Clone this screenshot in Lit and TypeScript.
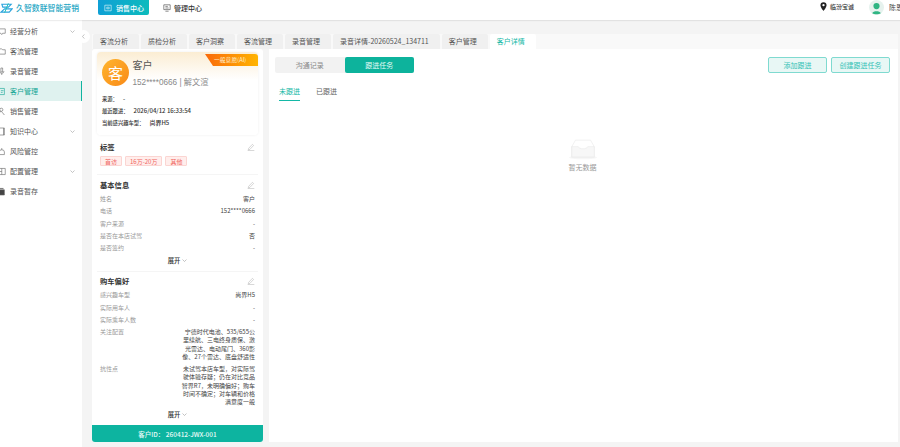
import {LitElement, html, css, svg} from 'lit';
import {customElement} from 'lit/decorators.js';

const chevron = html`<svg class="chev" viewBox="0 0 10 6"><path d="M1 1l4 4 4-4" fill="none" stroke="currentColor" stroke-width="1"/></svg>`;
const pencil = html`<svg class="pen" viewBox="0 0 12 12"><path d="M2.5 8l5.6-6 1.8 1.7-5.7 6-2.3.5zM1 11.3h10" fill="none" stroke="#a8a8a8" stroke-width=".7"/></svg>`;

const navIcons: Record<string, unknown> = {
  chat: svg`<path d="M-1 2h7v5h-3l-1 1.5-1-1.5h-2z"/>`,
  folder: svg`<path d="M-1 2h3l1 1h3v5h-7z"/>`,
  mic: svg`<path d="M1 1h2v4.500h-2zM-.5 4.500a2.500 2.500 0 0 0 5 0M2 7v2"/>`,
  cust: svg`<path d="M-1 1.500h6v7h-6zM1 4h3M1 6h2"/>`,
  sale: svg`<circle cx="1.500" cy="3" r="1.800"/><path d="M-1 9c0-3 1-4 2.500-4l1.500 1.500 2 2.500"/>`,
  book: svg`<path d="M-1 1h6v8h-6zM4 1v8"/>`,
  risk: svg`<path d="M2 1v2M-1 8.500h6v-3a3 2.500 0 0 0-6 0z"/>`,
  conf: svg`<path d="M-1 1.500h7v7h-7zM2 1.500v7M-1 5h3"/>`,
  draft: svg`<path d="M-1 3h6v6h-6z" fill="#444"/><path d="M0 1.500h4" stroke-width="1"/>`,
};

const nav = [
  {label: '经营分析', icon: 'chat', more: true},
  {label: '客流管理', icon: 'folder'},
  {label: '录音管理', icon: 'mic'},
  {label: '客户管理', icon: 'cust', active: true},
  {label: '销售管理', icon: 'sale'},
  {label: '知识中心', icon: 'book', more: true},
  {label: '风险管控', icon: 'risk'},
  {label: '配置管理', icon: 'conf', more: true},
  {label: '录音暂存', icon: 'draft'},
];

const tabs = ['客流分析', '质检分析', '客户洞察', '客流管理', '录音管理', '录音详情-20260524_134711', '客户管理', '客户详情'];

@customElement('app-root')
export class AppRoot extends LitElement {
  private row(k: string, v: unknown) {
    return html`<div class="row"><span class="k">${k}</span><span class="v">${v}</span></div>`;
  }

  override render() {
    return html`
      <header>
        <div class="brand">
          <svg viewBox="0 0 14 12" class="logo"><path d="M2 2h10L9 5H3zM5 7h8l-3 3.500H1z" fill="none" stroke="#2aa3dd" stroke-width="1.200"/><path d="M9 1L5 11" stroke="#18c0b4" stroke-width="1"/></svg>
          <span>久智数联智能营销</span>
        </div>
        <div class="topnav on">
          <svg viewBox="0 0 10 10"><path d="M1 1.500h8v7h-8zM3.500 4h3v2h-3z" fill="none" stroke="#fff" stroke-width=".7"/></svg>
          销售中心
        </div>
        <div class="topnav">
          <svg viewBox="0 0 10 10"><path d="M1 1h8v6h-8zM3 9h4M3 3h3M3 5h4" fill="none" stroke="#333" stroke-width=".7"/></svg>
          管理中心
        </div>
        <div class="spacer"></div>
        <svg class="pin" viewBox="0 0 8 10"><path fill-rule="evenodd" d="M4 0a3.500 3.500 0 0 1 3.500 3.500C7.500 6 4 10 4 10S.5 6 .5 3.500A3.500 3.500 0 0 1 4 0zm0 2.200a1.300 1.300 0 1 0 0 2.600 1.300 1.300 0 0 0 0-2.600z" fill="#222"/></svg>
        <span class="store">临汾宝诚</span>
        <svg class="avatar" viewBox="0 0 16 16"><circle cx="8" cy="8" r="8" fill="#e6f2ee"/><circle cx="8" cy="6.500" r="3.300" fill="#2fb583"/><path d="M3.500 14c1-2.500 8-2.500 9 0-2 1.500-7 1.500-9 0z" fill="#2fb583"/></svg>
        <span class="user">陈恩</span>
      </header>
      <div class="body">
        <nav>
          ${nav.map(
            (n) => html`<div class="item ${n.active ? 'active' : ''}">
              <svg class="nicon" viewBox="0 0 8 10">${navIcons[n.icon]}</svg>
              <span>${n.label}</span>
              ${n.more ? chevron : ''}
            </div>`
          )}
        </nav>
        <div class="collapse"><svg viewBox="0 0 6 8"><path d="M4 1.500L1.800 4 4 6.500" fill="none" stroke="#999" stroke-width=".7"/></svg></div>
        <main>
          <div class="tabs">
            ${tabs.map((t, i) => html`<div class="tab ${i === tabs.length - 1 ? 'on' : ''}">${t}</div>`)}
          </div>
          <div class="content">
            <section class="card">
              <div class="scroll">
                <div class="profile">
                  <div class="ribbon">一般意愿(AI)</div>
                  <div class="who">
                    <div class="face">客</div>
                    <div>
                      <div class="name">客户</div>
                      <div class="phone">152****0666 | 解文渲</div>
                    </div>
                  </div>
                  <div class="meta">
                    <div>来源：<i>-</i></div>
                    <div>最近跟进：<i>2026/04/12 16:33:54</i></div>
                    <div>当前感兴趣车型：<i>尚界H5</i></div>
                  </div>
                </div>

                <div class="sec tags-sec">
                  <div class="sec-h"><b>标签</b>${pencil}</div>
                  <div class="tags"><span>首访</span><span>16万-20万</span><span>其他</span></div>
                </div>

                <div class="sec">
                  <div class="sec-h"><b>基本信息</b>${pencil}</div>
                  ${this.row('姓名', '客户')}
                  ${this.row('电话', '152****0666')}
                  ${this.row('客户来源', '-')}
                  ${this.row('是否在本店试驾', '否')}
                  ${this.row('是否签约', '-')}
                  <div class="expand">展开 ${chevron}</div>
                </div>

                <div class="sec last">
                  <div class="sec-h"><b>购车偏好</b>${pencil}</div>
                  ${this.row('感兴趣车型', '尚界H5')}
                  ${this.row('实际用车人', '-')}
                  ${this.row('实际乘车人数', '-')}
                  ${this.row('关注配置', html`宁德时代电池、535/655公<br />里续航、三电终身质保、激<br />光雷达、电动尾门、360影<br />像、27个雷达、底盘舒适性`)}
                  ${this.row('抗性点', html`未试驾本店车型，对实际驾<br />驶体验存疑；仍在对比竞品<br />智界R7，未明确偏好；购车<br />时间不确定；对车辆和价格<br />满意度一般`)}
                  <div class="expand">展开 ${chevron}</div>
                </div>
              </div>
              <div class="cid">客户ID： 260412-JWX-001</div>
            </section>

            <section class="panel">
              <div class="toolbar">
                <div class="seg"><span>沟通记录</span><span class="on">跟进任务</span></div>
                <div class="btns"><button>添加跟进</button><button>创建跟进任务</button></div>
              </div>
              <div class="subtabs"><span class="on">未跟进</span><span>已跟进</span></div>
              <div class="empty">
                <svg viewBox="0 0 32 22"><ellipse cx="16" cy="19.500" rx="15" ry="2" fill="#f6f6f6"/><path d="M4 19V8l4-7h16l4 7v11z" fill="#fff" stroke="#eaeaea" stroke-width=".7"/><path d="M4 8h7c1 3 9 3 10 0h7v11H4z" fill="#f7f7f7" stroke="#eaeaea" stroke-width=".7"/></svg>
                <span>暂无数据</span>
              </div>
            </section>
          </div>
        </main>
      </div>
    `;
  }

  static override styles = css`
    :host {
      display: block;
      width: 900px;
      height: 447px;
      overflow: hidden;
      background: #f4f4f4;
      color: #333;
      font-family: 'Noto Sans CJK SC', 'Noto Sans', sans-serif;
      font-size: 7px;
    }

    header {
      position: relative;
      z-index: 2;
      display: flex;
      align-items: flex-start;
      height: 20px;
      background: #fff;
      box-shadow: 0 1px 1px rgba(0, 0, 0, 0.07);
    }
    .brand {
      display: flex;
      align-items: center;
      gap: 3px;
      width: 98px;
      height: 15px;
      font-size: 7.900px;
      font-weight: 500;
      color: #1fa6c4;
      white-space: nowrap;
    }
    .logo {
      width: 13px;
      height: 12px;
    }
    .topnav {
      display: flex;
      align-items: center;
      gap: 4px;
      height: 15px;
      padding: 0 0 0 6px;
      width: 51px;
      box-sizing: border-box;
      font-weight: 500;
    }
    .topnav svg {
      width: 8px;
      height: 8px;
    }
    .topnav.on {
      margin-right: 8px;
      background: linear-gradient(100deg, #0f9fd6, #0cbcbc);
      color: #fff;
      border-radius: 0 0 2px 2px;
    }
    .topnav:not(.on) {
      gap: 3px;
    }
    .spacer {
      flex: 1;
    }
    .pin {
      width: 7px;
      height: 9px;
      margin: 2px 3px 0 0;
    }
    .store {
      width: 39px;
      height: 14px;
      line-height: 14px;
      font-size: 6px;
      font-weight: 500;
    }
    .avatar {
      width: 15px;
      height: 15px;
      margin-right: 5px;
    }
    .user {
      width: 11px;
      overflow: hidden;
      white-space: nowrap;
      line-height: 14px;
      color: #444;
    }

    .body {
      position: relative;
      display: flex;
      height: 427px;
    }
    nav {
      width: 82px;
      flex: none;
      padding-top: 1px;
      background: #fff;
    }
    .item {
      display: flex;
      align-items: center;
      height: 20px;
      padding-right: 7px;
      color: #555;
      font-size: 7px;
      box-sizing: border-box;
    }
    .item span {
      flex: 1;
      margin-left: 3px;
    }
    .nicon {
      width: 7px;
      height: 9px;
      fill: none;
      stroke: #666;
      stroke-width: 0.7;
    }
    .item.active {
      background: #dff2ef;
      border-right: 1px solid #12b3a0;
      padding-right: 6px;
      color: #12a594;
    }
    .item.active .nicon {
      stroke: #12a594;
    }
    .chev {
      width: 5px;
      height: 3px;
      color: #888;
    }
    .collapse {
      position: absolute;
      left: 77px;
      top: 10px;
      display: flex;
      align-items: center;
      justify-content: center;
      width: 13px;
      height: 13px;
      border-radius: 50%;
      background: #fff;
    }
    .collapse svg {
      width: 5px;
      height: 7px;
    }

    main {
      flex: 1;
      min-width: 0;
      padding: 14px 2px 0 10px;
    }
    .tabs {
      display: flex;
      gap: 2px;
      height: 15px;
      background: #f9f9f9;
      margin-right: 0;
    }
    .tab {
      padding: 0 11px 0 7px;
      line-height: 15px;
      background: #f0f0f0;
      color: #555;
      border-radius: 2px 2px 0 0;
      white-space: nowrap;
    }
    .tab:first-child {
      margin-left: 1px;
    }
    .tab.on {
      background: #fff;
      color: #14b8a6;
    }
    .content {
      display: flex;
      gap: 6px;
      height: 393px;
    }

    .card {
      display: flex;
      flex-direction: column;
      width: 171px;
      flex: none;
      background: #fff;
      border-radius: 3px;
      overflow: hidden;
    }
    .scroll {
      flex: 1;
      padding: 3px 5px 0;
    }
    .profile {
      position: relative;
      height: 83px;
      padding: 7px 5px 0;
      box-sizing: border-box;
      border-radius: 4px;
      background: linear-gradient(180deg, #fbedd3 0, #fff 28px);
      box-shadow: 0 0 3px rgba(0, 0, 0, 0.07);
    }
    .ribbon {
      position: absolute;
      right: 0;
      top: 2px;
      width: 53px;
      height: 12px;
      line-height: 12px;
      padding-left: 9px;
      box-sizing: border-box;
      font-size: 5.800px;
      color: #fff0d0;
      background: linear-gradient(90deg, #fa6a0a, #ffb400);
      border-radius: 0 3px 0 0;
      clip-path: polygon(0 0, 100% 0, 100% 100%, 8px 100%);
    }
    .who {
      display: flex;
      gap: 3.500px;
    }
    .face {
      display: flex;
      align-items: center;
      justify-content: center;
      width: 27px;
      height: 27px;
      border-radius: 50%;
      flex: none;
      color: #fff;
      font-size: 15px;
      background: linear-gradient(135deg, #ffb52e, #f98a18);
    }
    .name {
      font-size: 10px;
      line-height: 12px;
      color: #555;
    }
    .phone {
      margin-top: 6px;
      font-size: 8.200px;
      line-height: 11px;
      color: #888;
      font-family: 'Liberation Sans', 'Noto Sans CJK SC', sans-serif;
    }
    .meta {
      margin-top: 5px;
      font-size: 5.300px;
      line-height: 12px;
      font-weight: 500;
      color: #333;
    }
    .meta i {
      margin-left: 5px;
      font-size: 6px;
      font-style: normal;
    }

    .sec {
      padding: 3px 3px 5px;
      border-bottom: 1px solid #f5f5f5;
    }
    .sec.last {
      padding-top: 2px;
      border: 0;
    }
    .tags-sec {
      padding-top: 5px;
      padding-bottom: 8px;
    }
    .sec-h {
      display: flex;
      align-items: center;
      justify-content: space-between;
      height: 14px;
      margin-bottom: 1px;
      font-size: 7.300px;
      color: #333;
    }
    .tags-sec .sec-h {
      margin-bottom: 2px;
    }
    .pen {
      width: 8px;
      height: 8px;
    }
    .tags {
      display: flex;
      gap: 3px;
    }
    .tags span {
      box-sizing: border-box;
      padding: 0 4px;
      height: 10px;
      line-height: 9px;
      font-size: 6px;
      color: #f0655f;
      background: #ffeeec;
      border: 0.500px solid #fbd5d2;
      border-radius: 1px;
    }
    .row {
      display: flex;
      justify-content: space-between;
      font-size: 6px;
      padding: 2px 0;
      line-height: 8.250px;
    }
    .k {
      color: #999;
      white-space: nowrap;
    }
    .v {
      text-align: right;
      color: #444;
      white-space: nowrap;
    }
    .expand {
      display: flex;
      align-items: center;
      justify-content: center;
      gap: 2px;
      height: 12px;
      font-size: 6.300px;
      font-weight: 500;
    }
    .cid {
      height: 19px;
      line-height: 19px;
      text-align: center;
      font-size: 6.500px;
      font-weight: 500;
      color: #e8fbf8;
      background: #0db4a0;
    }

    .panel {
      flex: 1;
      min-width: 0;
      background: #fff;
      padding: 8px 8px 0 6px;
    }
    .toolbar {
      display: flex;
      justify-content: space-between;
    }
    .seg {
      display: flex;
      width: 139px;
      height: 16px;
      background: #f2f2f2;
      border-radius: 2px;
    }
    .seg span {
      flex: 1;
      text-align: center;
      line-height: 16px;
      color: #888;
    }
    .seg .on {
      background: #0db39c;
      color: #e2faf5;
      border-radius: 2px;
    }
    .btns {
      display: flex;
      gap: 4px;
    }
    button {
      width: 59px;
      height: 16px;
      padding: 0;
      font: inherit;
      color: #35c2b5;
      background: #e8f7f5;
      border: 1px solid #7fdad0;
      border-radius: 2px;
    }
    .subtabs {
      display: flex;
      gap: 16px;
      margin: 11px 0 0 4px;
    }
    .subtabs span {
      width: 21px;
      height: 16px;
      line-height: 14px;
      color: #666;
      white-space: nowrap;
    }
    .subtabs .on {
      color: #14b8a6;
      border-bottom: 1px solid #14b8a6;
    }
    .empty {
      display: flex;
      flex-direction: column;
      align-items: center;
      margin: 38px 0 0 0;
      color: #999;
    }
    .empty svg {
      width: 30px;
      height: 21px;
    }
    .empty span {
      margin-top: 2px;
    }
  `;
}
